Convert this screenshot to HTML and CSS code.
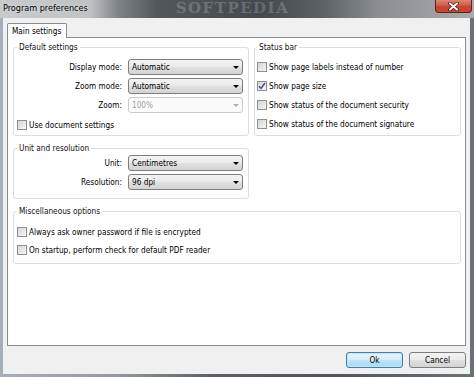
FILE: index.html
```html
<!DOCTYPE html>
<html lang="en">
<head>
    <meta charset="UTF-8">
    <title>Program preferences</title>
    <link rel="stylesheet" href="styles.css">
</head>
<body>
    <div class="window">
        <div class="titlebar">
            <span class="title">Program preferences</span>
            <span class="watermark">SOFTPEDIA</span>
            <div class="close">
                <svg width="11" height="9" viewBox="0 0 11 9">
                    <path d="M2 1.5 L9 7.5 M9 1.5 L2 7.5" stroke="#5a1d15" stroke-width="3.6" stroke-linecap="round"/>
                    <path d="M2 1.5 L9 7.5 M9 1.5 L2 7.5" stroke="#fff" stroke-width="2" stroke-linecap="round"/>
                </svg>
            </div>
        </div>

        <div class="client">
            <div class="tabs">
                <div class="tab">Main settings</div>
            </div>

            <div class="panel">
                <fieldset class="group defaults">
                    <legend>Default settings</legend>
                    <div class="fields">
                        <label>Display mode:</label>
                        <div class="combo">Automatic<span class="arrow"></span></div>
                        <label>Zoom mode:</label>
                        <div class="combo">Automatic<span class="arrow"></span></div>
                        <label>Zoom:</label>
                        <div class="combo disabled">100%<span class="arrow"></span></div>
                    </div>
                    <div class="check"><span class="box"></span>Use document settings</div>
                </fieldset>

                <fieldset class="group status">
                    <legend>Status bar</legend>
                    <div class="checks">
                        <div class="check"><span class="box"></span>Show page labels instead of number</div>
                        <div class="check">
                            <span class="box">
                                <svg width="8" height="8" viewBox="0 0 8 8"><path d="M1 4.2 L3 6.5 L7 1" fill="none" stroke="#3b4f8c" stroke-width="1.4"/></svg>
                            </span>Show page size
                        </div>
                        <div class="check"><span class="box"></span>Show status of the document security</div>
                        <div class="check"><span class="box"></span>Show status of the document signature</div>
                    </div>
                </fieldset>

                <fieldset class="group units">
                    <legend>Unit and resolution</legend>
                    <div class="fields">
                        <label>Unit:</label>
                        <div class="combo">Centimetres<span class="arrow"></span></div>
                        <label>Resolution:</label>
                        <div class="combo">96 dpi<span class="arrow"></span></div>
                    </div>
                </fieldset>

                <fieldset class="group misc">
                    <legend>Miscellaneous options</legend>
                    <div class="checks">
                        <div class="check"><span class="box"></span>Always ask owner password if file is encrypted</div>
                        <div class="check"><span class="box"></span>On startup, perform check for default PDF reader</div>
                    </div>
                </fieldset>
            </div>

            <div class="buttons">
                <button class="btn default" type="button">Ok</button>
                <button class="btn" type="button">Cancel</button>
            </div>
        </div>
    </div>
</body>
</html>
```

FILE: styles.css
```css
* {
    box-sizing: border-box;
}
body {
    margin: 0;
    font-family: "DejaVu Sans Condensed", "Liberation Sans", sans-serif;
    font-size: 8.2px;
    color: #000;
}
.window {
    width: 474px;
    height: 377px;
    display: flex;
    flex-direction: column;
    background: linear-gradient(90deg, #a6afb9 0, #9098a1 25%, #5a6066 45%, #4f555b 70%, #6c7279 100%);
}
.titlebar {
    height: 18px;
    display: grid;
    grid-template-columns: auto 1fr 37px;
    align-items: start;
    padding-right: 2px;
    background: linear-gradient(90deg, #c8cacc 0, #c0c2c4 19%, #7e8388 25%, #53585d 33%, #44494e 55%, #5c6166 68%, #8b8f93 80%, #a7abaf 100%);
}
.title {
    padding: 3px 0 0 3px;
    font-size: 9px;
    line-height: 10px;
    text-shadow: 0 0 3px #e8e8e8;
}
.watermark {
    padding-left: 88px;
    font-family: "DejaVu Serif", serif;
    font-weight: bold;
    font-size: 15px;
    line-height: 17px;
    letter-spacing: 1.5px;
    color: rgba(255, 255, 255, 0.2);
}
.close {
    width: 37px;
    height: 13px;
    display: flex;
    align-items: center;
    justify-content: center;
    border: 1px solid #5e221c;
    border-top: 0;
    border-radius: 0 0 4px 4px;
    background-color: #c9452f;
    background-image: linear-gradient(rgba(255, 255, 255, 0.35), rgba(255, 255, 255, 0.1) 48%, rgba(0, 0, 0, 0) 52%);
}
.client {
    flex: 1;
    margin: 0 4px 3px 3px;
    padding: 5px 4px 6px 4px;
    display: flex;
    flex-direction: column;
    background: #f0f0f0;
}
.tabs {
    display: flex;
}
.tab {
    position: relative;
    z-index: 1;
    height: 15px;
    margin-bottom: -1px;
    padding: 2px 5px 0 4px;
    line-height: 11px;
    border: 1px solid #898c95;
    border-bottom: 0;
    border-radius: 2px 2px 0 0;
    background: #fff;
}
.panel {
    flex: 1;
    display: grid;
    grid-template-columns: 236px 207px;
    grid-template-rows: 94px 56px 58px;
    gap: 7px 5px;
    align-content: start;
    padding: 4px 4px 0 5px;
    border: 1px solid #898c95;
    background: #fff;
}
.group {
    margin: 0;
    min-width: 0;
    padding: 0 5px 0 3px;
    border: 1px solid #d5dfe5;
    border-radius: 3px;
}
.group legend {
    padding: 0 2px;
    line-height: 10px;
    color: #111;
}
.status {
    padding-left: 2px;
}
.misc {
    grid-column: 1 / -1;
}
.fields {
    display: grid;
    grid-template-columns: 105px 115px;
    column-gap: 6px;
    row-gap: 3px;
    align-items: center;
    padding-top: 7px;
}
.units .fields {
    padding-top: 2px;
}
.fields label {
    text-align: right;
}
.combo {
    height: 16px;
    display: flex;
    align-items: center;
    justify-content: space-between;
    padding: 0 3px 0 3px;
    border: 1px solid #7e7e7e;
    border-radius: 3px;
    background: linear-gradient(#f3f3f3, #ececec 45%, #dfdfdf 55%, #d3d3d3);
}
.arrow {
    width: 0;
    height: 0;
    border-left: 3px solid transparent;
    border-right: 3px solid transparent;
    border-top: 3px solid #000;
}
.combo.disabled {
    border-color: #cbcbcb;
    background: #fbfbfb;
    color: #a0a0a0;
}
.combo.disabled .arrow {
    border-top-color: #b0b0b0;
}
.check {
    display: flex;
    align-items: center;
    gap: 2px;
    height: 19px;
}
.defaults .check {
    height: 14px;
    margin-top: 5px;
}
.status .checks {
    padding-top: 5px;
}
.misc .checks {
    padding-top: 7px;
}
.misc .check {
    height: 18px;
}
.box {
    width: 10px;
    height: 10px;
    flex: none;
    display: flex;
    align-items: center;
    justify-content: center;
    border: 1px solid #8e8f8f;
    background: linear-gradient(135deg, #d6d6d6, #f6f6f6);
}
.buttons {
    display: flex;
    justify-content: flex-end;
    gap: 6px;
    margin-top: 6px;
}
.btn {
    width: 57px;
    height: 16px;
    padding: 0;
    font: inherit;
    color: #000;
    border: 1px solid #7e7e7e;
    border-radius: 3px;
    background: linear-gradient(#f3f3f3, #ececec 45%, #dfdfdf 55%, #d3d3d3);
}
.btn.default {
    border-color: #3c7fb1;
    background: linear-gradient(#e8f5fc, #d8eefb 45%, #bee4f8 55%, #a9daf4);
    box-shadow: inset 0 0 0 1px #bfe6fa;
}
```
